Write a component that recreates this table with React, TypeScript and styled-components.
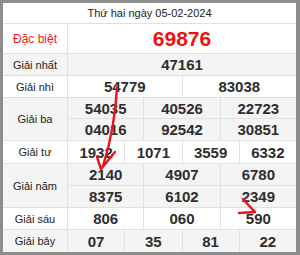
import React from 'react';
import styled, { createGlobalStyle } from 'styled-components';

const Global = createGlobalStyle`
  html, body { margin: 0; padding: 0; background: #ffffff; }
  body { font-family: "Liberation Sans", Arial, sans-serif; }
`;

const Frame = styled.div`
  position: relative;
  width: 300px;
  height: 255px;
  box-sizing: border-box;
  border-style: solid;
  border-color: #8d8d8d;
  border-width: 3px 4px 3px 3px;
  overflow: hidden;
  background: #ffffff;
`;

const Board = styled.div`
  display: grid;
  grid-template-columns: 65px repeat(12, 1fr);
  grid-template-rows: 21px 30px 22px 22px 21px 22px 23px 22px 22px 22px 23px;
  margin: -1px 0 0 -1px;
`;

const Cell = styled.div<{ $span: number; $rows?: number; $shade?: boolean }>`
  grid-column: span ${p => p.$span};
  grid-row: span ${p => p.$rows ?? 1};
  border-left: 1px solid #e0e0e0;
  border-top: 1px solid #e0e0e0;
  background: ${p => (p.$shade ? '#f4f4f4' : '#ffffff')};
  display: flex;
  align-items: center;
  justify-content: center;
  white-space: nowrap;
`;

const Title = styled(Cell)`
  font-size: 11px;
  color: #222222;
`;

const Label = styled(Cell)<{ $special?: boolean }>`
  font-size: ${p => (p.$special ? '12px' : '11px')};
  color: ${p => (p.$special ? '#f01818' : '#222222')};
`;

const Num = styled(Cell)<{ $special?: boolean }>`
  font-size: ${p => (p.$special ? '21px' : '15px')};
  font-weight: bold;
  color: ${p => (p.$special ? '#f01010' : '#2e2e2e')};
`;

const Marks = styled.svg`
  position: absolute;
  left: -3px;
  top: -3px;
  width: 300px;
  height: 255px;
  pointer-events: none;
`;

type Prize = { label: string; lines: string[][]; shade: boolean };

const prizes: Prize[] = [
  { label: 'Giải nhất', lines: [['47161']], shade: true },
  { label: 'Giải nhì', lines: [['54779', '83038']], shade: false },
  { label: 'Giải ba', lines: [['54035', '40526', '22723'], ['04016', '92542', '30851']], shade: true },
  { label: 'Giải tư', lines: [['1932', '1071', '3559', '6332']], shade: false },
  { label: 'Giải năm', lines: [['2140', '4907', '6780'], ['8375', '6102', '2349']], shade: true },
  { label: 'Giải sáu', lines: [['806', '060', '590']], shade: false },
  { label: 'Giải bảy', lines: [['07', '35', '81', '22']], shade: true },
];

export default function App() {
  return (
    <>
      <Global />
      <Frame>
        <Board>
          <Title $span={13}>Thứ hai ngày 05-02-2024</Title>
          <Label $span={1} $special>Đặc biệt</Label>
          <Num $span={12} $special>69876</Num>
          {prizes.map(p => (
            <React.Fragment key={p.label}>
              <Label $span={1} $rows={p.lines.length} $shade={p.shade}>{p.label}</Label>
              {p.lines.map((line, i) =>
                line.map((n, j) => (
                  <Num key={`${i}-${j}`} $span={12 / line.length} $shade={p.shade}>{n}</Num>
                ))
              )}
            </React.Fragment>
          ))}
        </Board>
        <Marks viewBox="0 0 300 255">
          <g fill="none" stroke="#e8141b" strokeWidth="2.4" strokeLinecap="round" strokeLinejoin="round">
            <path d="M117 87 Q115 128 103 166" />
            <path d="M97 157 L101 169 L115 152" />
            <path d="M243 199 Q249 206 255 212" />
            <path d="M239 213 L255 212" />
          </g>
        </Marks>
      </Frame>
    </>
  );
}
